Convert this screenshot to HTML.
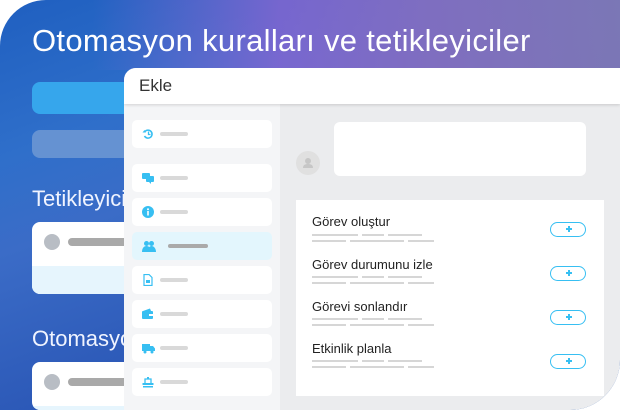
<!DOCTYPE html>
<html><head><meta charset="utf-8"><style>
*{margin:0;padding:0;box-sizing:border-box}
html,body{width:620px;height:410px;overflow:hidden}
body{background:#fff;font-family:"Liberation Sans",sans-serif;position:relative}
.bg{position:absolute;left:0;top:0;width:620px;height:410px;border-radius:46px 0 50px 0;overflow:hidden;
background:linear-gradient(160deg,#1f5fc0 0%,#2f6fca 25%,#3b6cc7 40%,#2a56b5 70%,#0a44a0 100%)}
.bg:before{content:"";position:absolute;left:0;top:0;width:620px;height:70px;
background:linear-gradient(90deg,rgba(0,0,0,0) 15%,rgba(150,100,210,.7) 45%,rgba(140,110,190,.85) 70%,rgba(130,120,180,.9) 100%)}
.t{position:absolute;color:#fff;font-size:31px;left:32px;top:23px;letter-spacing:.3px;white-space:nowrap}
.s{position:absolute;color:#f0f4ff;font-size:22px;left:32px;white-space:nowrap}
.a{position:absolute;left:32px;width:120px;border-radius:8px}
.card{position:absolute;left:32px;width:120px;border-radius:8px;background:#fff;overflow:hidden}
.dot{position:absolute;left:44px;width:16px;height:16px;border-radius:50%;background:#b8bdc4}
.gb{position:absolute;left:68px;width:70px;height:8px;border-radius:4px;background:#a9a9a9}
.modal{position:absolute;left:124px;top:68px;width:496px;height:342px;border-radius:12px 0 50px 0;overflow:hidden;background:#ebecee}
.hdr{position:absolute;left:0;top:0;width:496px;height:36px;background:#fff;box-shadow:0 1px 3px rgba(0,0,0,.15);z-index:2}
.hdr span{position:absolute;left:15px;top:8px;font-size:17px;color:#333}
.side{position:absolute;left:0;top:36px;width:156px;height:306px;background:#f4f5f7}
.it{position:absolute;left:8px;width:140px;height:28px;background:#fff;border-radius:5px}
.it.act{background:#e3f6fd}
.it .ic{position:absolute;left:10px;top:8px;width:12px;height:12px}
.it .ln{position:absolute;left:28px;top:12px;width:28px;height:4px;border-radius:2px;background:#d9d9d9}
.it.act .ln{left:36px;width:40px;background:#aaa}
.bub{position:absolute;left:210px;top:54px;width:252px;height:54px;background:#fff;border-radius:6px}
.av{position:absolute;left:172px;top:83px;width:24px;height:24px;border-radius:50%;background:#e0e0e0}
.panel{position:absolute;left:172px;top:132px;width:308px;height:196px;background:#fff}
.row{position:absolute;left:16px}
.row b{font-weight:normal;font-size:13px;color:#222;display:block;height:16px;white-space:nowrap}
.btn{position:absolute;left:254px;width:36px;height:15px;border:1.5px solid #37bff2;border-radius:8px}
.btn:before{content:"";position:absolute;left:15px;top:5px;width:6px;height:2px;background:#37bff2}
.btn:after{content:"";position:absolute;left:17px;top:3px;width:2px;height:6px;background:#37bff2}
.lx{position:absolute;height:2px;background:#d6d6d6}
</style></head><body>
<div class="bg">
<div class="t">Otomasyon kuralları ve tetikleyiciler</div>
<div class="a" style="top:82px;height:32px;background:#36a6ec"></div>
<div class="a" style="top:130px;height:28px;background:#6592d2"></div>
<div class="s" style="top:186px">Tetikleyiciler</div>
<div class="card" style="top:222px;height:72px"><div style="position:absolute;top:44px;left:0;width:120px;height:28px;background:#e6f5fd"></div></div>
<div class="dot" style="top:234px"></div><div class="gb" style="top:238px"></div>
<div class="s" style="top:326px">Otomasyon</div>
<div class="card" style="top:362px;height:48px"><div style="position:absolute;top:44px;left:0;width:120px;height:4px;background:#e6f5fd"></div></div>
<div class="dot" style="top:374px"></div><div class="gb" style="top:378px"></div>
</div>
<div class="modal">
<div class="hdr"><span>Ekle</span></div>
<div class="side">
<div class="it" style="top:16px"><svg class="ic" viewBox="0 0 12 12"><path d="M3 3.5A4 4 0 1 1 2.5 8" fill="none" stroke="#37bff2" stroke-width="1.6"/><path d="M0.5 4.5h3.5L2.5 2z" fill="#37bff2"/><path d="M6.5 3.5v3h2" fill="none" stroke="#37bff2" stroke-width="1.3"/></svg><div class="ln"></div></div>
<div class="it" style="top:60px"><svg class="ic" viewBox="0 0 12 12"><rect x="0" y="1" width="8" height="6" rx="1" fill="#37bff2"/><rect x="4" y="4" width="8" height="6" rx="1" fill="#37bff2"/><path d="M9 10v2l-2-2z" fill="#37bff2"/></svg><div class="ln"></div></div>
<div class="it" style="top:94px"><svg class="ic" viewBox="0 0 12 12"><circle cx="6" cy="6" r="6" fill="#37bff2"/><rect x="5.2" y="5" width="1.6" height="4.5" fill="#fff"/><circle cx="6" cy="3.2" r="1" fill="#fff"/></svg><div class="ln"></div></div>
<div class="it act" style="top:128px"><svg class="ic" viewBox="0 0 14 12" style="width:14px"><circle cx="4.5" cy="3.5" r="2.5" fill="#37bff2"/><circle cx="9.5" cy="3.5" r="2.5" fill="#37bff2"/><path d="M0 12c0-4 2-6 4.5-6S9 8 9 12z" fill="#37bff2"/><path d="M6 12c0-4 1.5-6 3.5-6S14 8 14 12z" fill="#37bff2"/></svg><div class="ln"></div></div>
<div class="it" style="top:162px"><svg class="ic" viewBox="0 0 12 12"><path d="M2 0.5h5l3 3V11.5H2z" fill="none" stroke="#37bff2" stroke-width="1.2"/><rect x="4" y="6" width="4" height="3" fill="#37bff2"/></svg><div class="ln"></div></div>
<div class="it" style="top:196px"><svg class="ic" viewBox="0 0 12 12"><rect x="0" y="3" width="11" height="8" rx="1" fill="#37bff2"/><path d="M1 3l7-2.5 1 2.5" fill="#37bff2"/><rect x="7" y="6" width="4" height="2" fill="#fff"/></svg><div class="ln"></div></div>
<div class="it" style="top:230px"><svg class="ic" viewBox="0 0 13 12" style="width:13px"><rect x="0" y="2" width="8" height="7" fill="#37bff2"/><path d="M8 4h3l2 2.5V9H8z" fill="#37bff2"/><circle cx="3" cy="10" r="1.5" fill="#37bff2"/><circle cx="10" cy="10" r="1.5" fill="#37bff2"/></svg><div class="ln"></div></div>
<div class="it" style="top:264px"><svg class="ic" viewBox="0 0 12 12"><path d="M3 7V3h6v4" fill="none" stroke="#37bff2" stroke-width="1.3"/><rect x="0.5" y="7" width="11" height="2" fill="#37bff2"/><rect x="1" y="10" width="10" height="1.5" fill="#37bff2"/><rect x="5" y="1" width="2" height="2" fill="#37bff2"/></svg><div class="ln"></div></div>
</div>
<div class="bub"></div>
<div class="av"><svg viewBox="0 0 24 24" width="24" height="24"><circle cx="12" cy="10" r="3" fill="#c6c6c6"/><path d="M7 17c0-3 2-4 5-4s5 1 5 4z" fill="#c6c6c6"/></svg></div>
<div class="panel">
<div class="row" style="top:14px"><b>Görev oluştur</b></div>
<div class="row" style="top:57px"><b>Görev durumunu izle</b></div>
<div class="row" style="top:99px"><b>Görevi sonlandır</b></div>
<div class="row" style="top:141px"><b>Etkinlik planla</b></div>
<div class="btn" style="top:22px"></div>
<div class="btn" style="top:66px"></div>
<div class="btn" style="top:110px"></div>
<div class="btn" style="top:154px"></div>
</div>
</div>
<div class="lx" style="left:312px;top:234px;width:46px"></div><div class="lx" style="left:362px;top:234px;width:22px"></div><div class="lx" style="left:388px;top:234px;width:34px"></div>
<div class="lx" style="left:312px;top:240px;width:34px"></div><div class="lx" style="left:350px;top:240px;width:54px"></div><div class="lx" style="left:408px;top:240px;width:26px"></div>
<div class="lx" style="left:312px;top:276px;width:46px"></div><div class="lx" style="left:362px;top:276px;width:22px"></div><div class="lx" style="left:388px;top:276px;width:34px"></div>
<div class="lx" style="left:312px;top:282px;width:34px"></div><div class="lx" style="left:350px;top:282px;width:54px"></div><div class="lx" style="left:408px;top:282px;width:26px"></div>
<div class="lx" style="left:312px;top:318px;width:46px"></div><div class="lx" style="left:362px;top:318px;width:22px"></div><div class="lx" style="left:388px;top:318px;width:34px"></div>
<div class="lx" style="left:312px;top:324px;width:34px"></div><div class="lx" style="left:350px;top:324px;width:54px"></div><div class="lx" style="left:408px;top:324px;width:26px"></div>
<div class="lx" style="left:312px;top:360px;width:46px"></div><div class="lx" style="left:362px;top:360px;width:22px"></div><div class="lx" style="left:388px;top:360px;width:34px"></div>
<div class="lx" style="left:312px;top:366px;width:34px"></div><div class="lx" style="left:350px;top:366px;width:54px"></div><div class="lx" style="left:408px;top:366px;width:26px"></div>
</body></html>
